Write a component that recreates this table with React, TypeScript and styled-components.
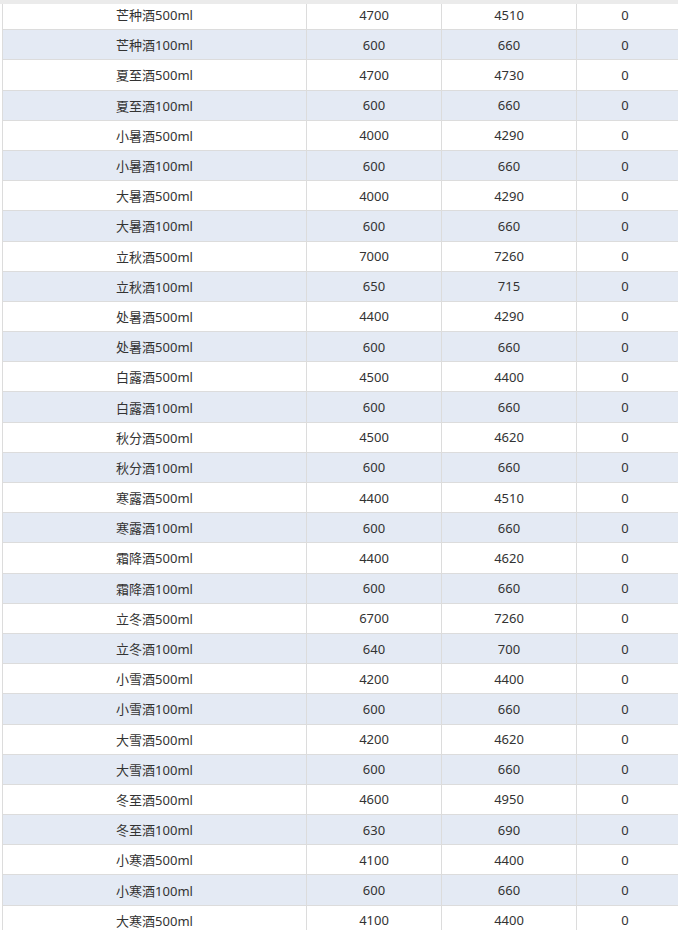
import { ReactElement } from 'react';
import styled, { createGlobalStyle } from 'styled-components';

const GlobalStyle = createGlobalStyle`
  html, body {
    margin: 0;
    padding: 0;
    background: #ffffff;
    overflow: hidden;
  }
  body {
    font-family: "Noto Sans", "Noto Sans CJK SC", sans-serif;
  }
`;

interface PriceRow {
  name: string;
  cost: number;
  price: number;
  stock: number;
}

const rows: PriceRow[] = [
  { name: '芒种酒500ml', cost: 4700, price: 4510, stock: 0 },
  { name: '芒种酒100ml', cost: 600, price: 660, stock: 0 },
  { name: '夏至酒500ml', cost: 4700, price: 4730, stock: 0 },
  { name: '夏至酒100ml', cost: 600, price: 660, stock: 0 },
  { name: '小暑酒500ml', cost: 4000, price: 4290, stock: 0 },
  { name: '小暑酒100ml', cost: 600, price: 660, stock: 0 },
  { name: '大暑酒500ml', cost: 4000, price: 4290, stock: 0 },
  { name: '大暑酒100ml', cost: 600, price: 660, stock: 0 },
  { name: '立秋酒500ml', cost: 7000, price: 7260, stock: 0 },
  { name: '立秋酒100ml', cost: 650, price: 715, stock: 0 },
  { name: '处暑酒500ml', cost: 4400, price: 4290, stock: 0 },
  { name: '处暑酒500ml', cost: 600, price: 660, stock: 0 },
  { name: '白露酒500ml', cost: 4500, price: 4400, stock: 0 },
  { name: '白露酒100ml', cost: 600, price: 660, stock: 0 },
  { name: '秋分酒500ml', cost: 4500, price: 4620, stock: 0 },
  { name: '秋分酒100ml', cost: 600, price: 660, stock: 0 },
  { name: '寒露酒500ml', cost: 4400, price: 4510, stock: 0 },
  { name: '寒露酒100ml', cost: 600, price: 660, stock: 0 },
  { name: '霜降酒500ml', cost: 4400, price: 4620, stock: 0 },
  { name: '霜降酒100ml', cost: 600, price: 660, stock: 0 },
  { name: '立冬酒500ml', cost: 6700, price: 7260, stock: 0 },
  { name: '立冬酒100ml', cost: 640, price: 700, stock: 0 },
  { name: '小雪酒500ml', cost: 4200, price: 4400, stock: 0 },
  { name: '小雪酒100ml', cost: 600, price: 660, stock: 0 },
  { name: '大雪酒500ml', cost: 4200, price: 4620, stock: 0 },
  { name: '大雪酒100ml', cost: 600, price: 660, stock: 0 },
  { name: '冬至酒500ml', cost: 4600, price: 4950, stock: 0 },
  { name: '冬至酒100ml', cost: 630, price: 690, stock: 0 },
  { name: '小寒酒500ml', cost: 4100, price: 4400, stock: 0 },
  { name: '小寒酒100ml', cost: 600, price: 660, stock: 0 },
  { name: '大寒酒500ml', cost: 4100, price: 4400, stock: 0 },
];

const TableWrapper = styled.div`
  position: relative;
  padding-left: 2px;
  height: 930px;
  overflow: hidden;

  /* bottom edge of the sticky header, the rest is scrolled away */
  &::before {
    content: '';
    position: absolute;
    top: 0;
    left: 0;
    right: 0;
    height: 4px;
    background: #ebebeb;
    z-index: 2;
  }
`;

const Body = styled.div`
  border-left: 1px solid #dcdcdc;
`;

const Row = styled.div<{ $striped: boolean }>`
  display: grid;
  grid-template-columns: 304px 135px 135px 1fr;
  height: 30.2px;
  box-sizing: border-box;
  border-bottom: 1px solid #dcdcdc;
  background: ${({ $striped }) => ($striped ? '#e4eaf4' : '#ffffff')};
`;

const Cell = styled.div<{ $last?: boolean }>`
  display: flex;
  align-items: center;
  justify-content: center;
  border-right: ${({ $last }) => ($last ? 'none' : '1px solid #dcdcdc')};
  padding-right: ${({ $last }) => ($last ? '5px' : '0')};
  font-size: 13px;
  color: #333333;
  white-space: nowrap;
`;

export default function App(): ReactElement {
  return (
    <>
      <GlobalStyle />
      <TableWrapper>
        <Body>
          {rows.map((row, i) => (
            <Row key={i} $striped={i % 2 === 1}>
              <Cell>{row.name}</Cell>
              <Cell>{row.cost}</Cell>
              <Cell>{row.price}</Cell>
              <Cell $last>{row.stock}</Cell>
            </Row>
          ))}
        </Body>
      </TableWrapper>
    </>
  );
}
